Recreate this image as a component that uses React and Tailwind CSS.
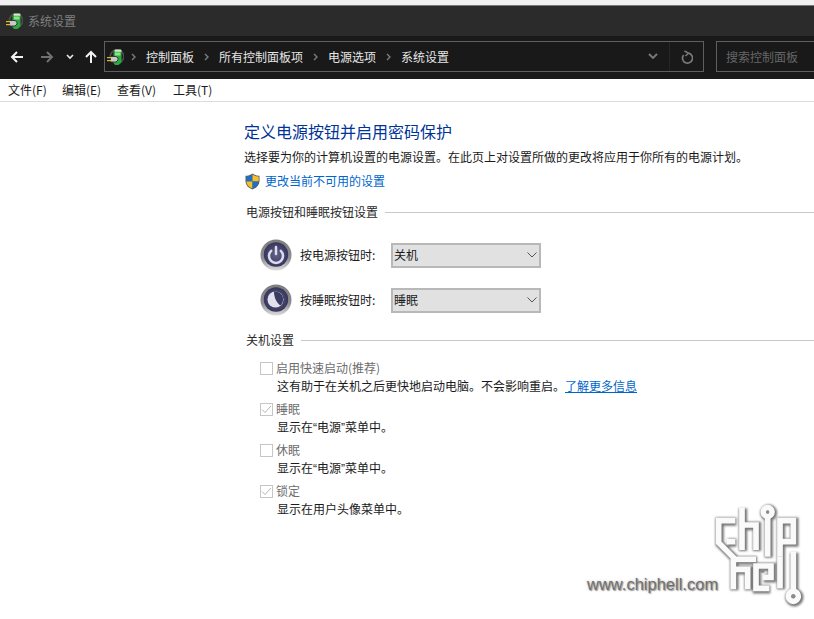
import React from "react";

function PlugIcon() {
  return (
    <svg width="17" height="18" viewBox="0 0 17 18" className="shrink-0">
      <circle cx="10" cy="8.5" r="6.7" fill="none" stroke="#4d4d4d" strokeWidth="1.6" />
      <rect x="7.5" y="1.5" width="7" height="3" rx="1" fill="#cfe8c4" />
      <path d="M6.5 3.8 H14.5 V14.5 L11.5 17 H8 L6.5 15 Z" fill="#2aa93f" />
      <rect x="8" y="4.5" width="5.5" height="3" fill="#8fe08a" />
      <path d="M3.5 8.5 H9 L11 10 V12 L9 14 H3.5 Z" fill="#c9c9c9" stroke="#2f2f2f" strokeWidth="0.9" />
      <rect x="0" y="9" width="4" height="1.2" fill="#e8b71a" />
      <rect x="0" y="12" width="4" height="1.2" fill="#e8b71a" />
    </svg>
  );
}

function Sep({ className }) {
  return (
    <svg width="5" height="8" viewBox="0 0 5 8" className={"shrink-0 " + className}>
      <path d="M1 1 L4 4 L1 7" fill="none" stroke="#7d7d7d" strokeWidth="1.4" />
    </svg>
  );
}

function Crumb({ children, className }) {
  return <span className={"text-[12px] leading-[18px] text-[#e6e6e6] whitespace-nowrap " + className}>{children}</span>;
}

function MenuItem({ children, className }) {
  return <span className={"text-[12px] leading-[18px] text-[#1a1a1a] whitespace-nowrap " + className}>{children}</span>;
}

function RoundIcon({ kind }) {
  const g = "rim" + kind;
  const f = "face" + kind;
  return (
    <svg width="32" height="32" viewBox="0 0 32 32" className="shrink-0">
      <defs>
        <linearGradient id={g} x1="0" y1="0" x2="0" y2="1">
          <stop offset="0" stopColor="#7e7e7e" />
          <stop offset="0.6" stopColor="#8d8d92" />
          <stop offset="1" stopColor="#dedede" />
        </linearGradient>
        <radialGradient id={f} cx="0.5" cy="0.5" r="0.55">
          <stop offset="0" stopColor="#62628a" />
          <stop offset="1" stopColor="#323258" />
        </radialGradient>
      </defs>
      <circle cx="16" cy="16" r="15.5" fill={`url(#${g})`} />
      <circle cx="16" cy="15.5" r="12.2" fill={`url(#${f})`} />
      {kind === "power" ? (
        <g fill="none" stroke="#dcdcec" strokeWidth="2.5" strokeLinecap="round">
          <path d="M11.2 11.8 A7 7 0 1 0 20.8 11.8" />
          <path d="M16 8 V15" />
        </g>
      ) : (
        <>
          <circle cx="15.5" cy="15.5" r="8" fill="#e2e2ee" />
          <path d="M14 7.5 C18 7 22.5 9.5 23 14 C23.3 17 22.5 19.5 20.5 21.5 C16.5 19 14 13.5 14 7.5 Z" fill="#3c3c62" />
        </>
      )}
    </svg>
  );
}

function Row({ icon, label, value, className }) {
  return (
    <div className={"flex items-center " + className}>
      <RoundIcon kind={icon} />
      <span className="ml-[8px] w-[91px] text-[12px] leading-[18px] text-[#1a1a1a]">{label}</span>
      <div className="flex h-[25px] w-[150px] items-center justify-between border-2 border-[#b8b8b8] bg-[#e1e1e1] pl-[1px] pr-[2px] text-[12px] text-[#1a1a1a]">
        <span>{value}</span>
        <svg width="10" height="6" viewBox="0 0 10 6">
          <path d="M0.5 0.5 L5 5 L9.5 0.5" fill="none" stroke="#555" strokeWidth="1" />
        </svg>
      </div>
    </div>
  );
}

function SectionHead({ title, className }) {
  return (
    <div className={"flex h-[18px] items-center pl-[2px] " + className}>
      <span className="text-[12px] leading-[18px] text-[#2a2a2a] whitespace-nowrap">{title}</span>
      <div className="ml-[7px] h-px flex-1 bg-[#c8c8c8]" />
    </div>
  );
}

function Check({ label, checked, children, className }) {
  return (
    <div className={"pl-[16px] " + className}>
      <div className="flex h-[18px] items-center">
        <div className="flex h-[13px] w-[13px] items-center justify-center border border-[#c6c6c6] bg-white">
          {checked && (
            <svg width="11" height="9" viewBox="0 0 11 9">
              <path d="M1 4.5 L4 7.5 L10 1" fill="none" stroke="#b5b5b5" strokeWidth="1" />
            </svg>
          )}
        </div>
        <span className="ml-[3px] text-[12px] leading-[18px] text-[#6d6d6d]">{label}</span>
      </div>
      <div className="pl-[17px] text-[12px] leading-[18px] text-[#1a1a1a]">{children}</div>
    </div>
  );
}

function Q({ children }) {
  return <span className="font-['Liberation_Sans',sans-serif]">{children}</span>;
}

function Watermark() {
  return (
    <div className="absolute left-[587px] top-[500px] h-[110px] w-[227px]">
      <span className="absolute left-0 top-[74px] font-['Liberation_Sans',sans-serif] text-[16.5px] leading-[20px] text-[#707070] [text-shadow:1px_1px_1px_#999999,0_0_3px_#bbbbbb]">
        www.chiphell.com
      </span>
      <svg width="108" height="110" viewBox="0 0 324 330" className="absolute left-[119px] top-0">
        <defs>
          <filter id="wmshadow" x="-10%" y="-10%" width="120%" height="120%">
            <feGaussianBlur stdDeviation="3.5" />
          </filter>
        </defs>
        {[
          { stroke: "#777777", width: 25, filter: "url(#wmshadow)", dx: 3, dy: 3 },
          { stroke: "#fafafa", width: 17, dx: 0, dy: 0 },
        ].map((s, i) => (
          <g key={i} transform={`translate(${s.dx} ${s.dy})`} fill="none" stroke={s.stroke} strokeWidth={s.width} filter={s.filter} strokeLinejoin="miter">
            <path d="M88 62 H38 V128 L82 172 V268" />
            <path d="M62 125 H88" />
            <path d="M108 22 V150" />
            <path d="M108 75 H150 V150" />
            <path d="M185 50 V170" />
            <circle cx="185" cy="36" r="13" />
            <path d="M222 170 V62 H262 V125 H222" />
            <path d="M82 178 H150" />
            <path d="M82 208 H125 V268" />
            <path d="M190 265 H150 V198 H195 V232 H170" />
            <path d="M222 170 V265" />
            <path d="M262 155 V272" />
            <circle cx="262" cy="289" r="15" />
          </g>
        ))}
        <circle cx="185" cy="36" r="5" fill="#8a8a8a" />
        <circle cx="262" cy="289" r="6" fill="#8a8a8a" />
        <circle cx="170" cy="213" r="6" fill="#8a8a8a" />
      </svg>
    </div>
  );
}

export default function App() {
  return (
    <div className="relative h-[619px] w-[814px] overflow-hidden bg-white font-['Noto_Sans_CJK_SC','Liberation_Sans',sans-serif]">
      <div className="h-[5px] bg-[#f0f0f0]" />
      <div className="h-px bg-[#777777]" />
      <div className="flex h-[30px] items-center bg-[#2b2b2b] pl-[6px]">
        <PlugIcon />
        <span className="ml-[5px] text-[12px] leading-[18px] text-[#7f7f7f]">系统设置</span>
      </div>
      <div className="flex h-[43px] items-center bg-[#191919] pb-[2px]">
        <svg width="14" height="14" viewBox="0 0 14 14" className="ml-[10px]">
          <path d="M13 7 H2 M7 2 L2 7 L7 12" fill="none" stroke="#f2f2f2" strokeWidth="2" />
        </svg>
        <svg width="14" height="14" viewBox="0 0 14 14" className="ml-[16px]">
          <path d="M1 7 H12 M7 2 L12 7 L7 12" fill="none" stroke="#707070" strokeWidth="2" />
        </svg>
        <svg width="8" height="6" viewBox="0 0 8 6" className="ml-[12px]">
          <path d="M1 1 L4 4 L7 1" fill="none" stroke="#e8e8e8" strokeWidth="1.6" />
        </svg>
        <svg width="14" height="14" viewBox="0 0 14 14" className="ml-[10px]">
          <path d="M7 13 V2 M2 7 L7 2 L12 7" fill="none" stroke="#f2f2f2" strokeWidth="2" />
        </svg>
        <div className="ml-[6px] flex h-[31px] w-[600px] items-center border border-[#5f5f5f] bg-[#191919] pl-[2px]">
          <PlugIcon />
          <Sep className="ml-[7px]" />
          <Crumb className="ml-[10px]">控制面板</Crumb>
          <Sep className="ml-[10px]" />
          <Crumb className="ml-[10px]">所有控制面板项</Crumb>
          <Sep className="ml-[10px]" />
          <Crumb className="ml-[10px]">电源选项</Crumb>
          <Sep className="ml-[10px]" />
          <Crumb className="ml-[10px]">系统设置</Crumb>
          <div className="ml-auto flex h-full items-center">
            <svg width="10" height="7" viewBox="0 0 10 7" className="mr-[11px]">
              <path d="M1 1 L5 5 L9 1" fill="none" stroke="#7a7a7a" strokeWidth="1.8" />
            </svg>
            <div className="h-full w-px bg-[#262626]" />
            <div className="flex w-[33px] items-center justify-center">
              <svg width="12" height="14" viewBox="0 0 12 14">
                <path d="M7.5 3.2 A5 5 0 1 1 2.6 5" fill="none" stroke="#7a7a7a" strokeWidth="1.7" />
                <path d="M3.5 1 L7.5 3.2 L4.5 6" fill="none" stroke="#7a7a7a" strokeWidth="1.5" />
              </svg>
            </div>
          </div>
        </div>
        <div className="ml-[12px] flex h-[31px] flex-1 items-center border border-r-0 border-[#5f5f5f] pl-[9px] text-[12px] text-[#666666] whitespace-nowrap">
          搜索控制面板
        </div>
      </div>
      <div className="flex h-[22px] items-center pl-[8px]">
        <MenuItem className="w-[54px]">文件(F)</MenuItem>
        <MenuItem className="w-[55px]">编辑(E)</MenuItem>
        <MenuItem className="w-[56px]">查看(V)</MenuItem>
        <MenuItem>工具(T)</MenuItem>
      </div>
      <div className="h-px bg-[#dcdcdc]" />

      <div className="pl-[244px] pt-[17px]">
        <div className="h-6 text-[16px] leading-6 text-[#003399]">定义电源按钮并启用密码保护</div>
        <div className="mt-[5px] h-[18px] text-[12px] leading-[18px] text-[#1a1a1a] whitespace-nowrap">
          选择要为你的计算机设置的电源设置。在此页上对设置所做的更改将应用于你所有的电源计划。
        </div>
        <div className="mt-[6px] flex h-[18px] items-center pl-px">
          <svg width="15" height="17" viewBox="0 0 15 17" className="shrink-0">
            <path d="M7.5 0.5 C5.5 2 3 2.8 0.5 2.8 V8 C0.5 12 3.5 15 7.5 16.5 C11.5 15 14.5 12 14.5 8 V2.8 C12 2.8 9.5 2 7.5 0.5 Z" fill="#5a5a5a" />
            <path d="M7.5 1.5 V8.5 H1.3 V3.5 C3.5 3.4 5.8 2.8 7.5 1.5 Z" fill="#1f70c4" />
            <path d="M7.5 1.5 V8.5 H13.7 V3.5 C11.5 3.4 9.2 2.8 7.5 1.5 Z" fill="#f6c02a" />
            <path d="M7.5 8.5 V15.6 C4.5 14.4 1.6 12 1.3 8.5 Z" fill="#f6c02a" />
            <path d="M7.5 8.5 V15.6 C10.5 14.4 13.4 12 13.7 8.5 Z" fill="#1f70c4" />
          </svg>
          <span className="ml-[5px] text-[12px] leading-[18px] text-[#0066cc]">更改当前不可用的设置</span>
        </div>
        <SectionHead title="电源按钮和睡眠按钮设置" className="mt-[13px]" />
        <Row icon="power" label="按电源按钮时:" value="关机" className="ml-[16px] mt-[18px]" />
        <Row icon="sleep" label="按睡眠按钮时:" value="睡眠" className="ml-[16px] mt-[13px]" />
        <SectionHead title="关机设置" className="mt-[15px]" />
        <Check label="启用快速启动(推荐)" className="mt-[10px]">
          这有助于在关机之后更快地启动电脑。不会影响重启。
          <span className="text-[#0066cc] underline">了解更多信息</span>
        </Check>
        <Check label="睡眠" checked className="mt-[5px]">显示在<Q>“</Q>电源<Q>”</Q>菜单中。</Check>
        <Check label="休眠" className="mt-[5px] -translate-y-px">显示在<Q>“</Q>电源<Q>”</Q>菜单中。</Check>
        <Check label="锁定" checked className="mt-[3px]">显示在用户头像菜单中。</Check>
      </div>
      <Watermark />
    </div>
  );
}
